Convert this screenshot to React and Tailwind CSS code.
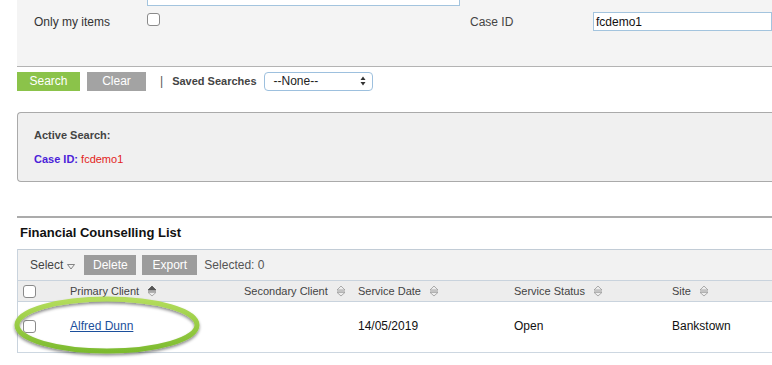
import React from 'react';

const SortIcon = ({ active }) => (
  <svg width="10" height="12" viewBox="0 0 10 12" className="shrink-0">
    <path d="M5 1 L9 5 L1 5 Z" fill={active ? '#555' : 'none'} stroke={active ? '#555' : '#999'} strokeWidth="0.8" />
    <line x1="1" y1="6.2" x2="9" y2="6.2" stroke={active ? '#777' : '#aaa'} strokeWidth="0.8" />
    <path d="M1 7.4 L9 7.4 L5 11 Z" fill="none" stroke="#999" strokeWidth="0.8" />
  </svg>
);

const Check = ({ className = '' }) => (
  <span className={`inline-block w-[13px] h-[13px] rounded-[3px] border border-[#8a8a8a] bg-white ${className}`} />
);

const columns = [
  { label: 'Primary Client', w: 'w-[174px]', active: true },
  { label: 'Secondary Client', w: 'w-[114px]' },
  { label: 'Service Date', w: 'w-[156px]' },
  { label: 'Service Status', w: 'w-[158px]' },
  { label: 'Site', w: 'flex-1' },
];

export default function App() {
  return (
    <div
      className="relative w-[772px] h-[365px] overflow-hidden bg-white text-[#333]"
      style={{ fontFamily: '"Liberation Sans", Arial, sans-serif' }}
    >
      {/* Search criteria panel */}
      <div className="ml-[17px] h-[67px] bg-[#f4f4f4] border-b border-[#b3b3b3]">
        <div className="pl-[130px]">
          <div className="w-[313px] h-[6px] bg-white border-x border-b border-[#a3c4de]" />
        </div>
        <div className="flex items-center mt-[6px] h-[19px] text-[12px]">
          <span className="w-[130px] pl-[17px]">Only my items</span>
          <span className="w-[323px] flex items-center -mt-[4px]">
            <Check />
          </span>
          <span className="w-[123px] text-[#444]">Case ID</span>
          <div className="flex-1 h-[19px] bg-white border border-[#a3c4de] pl-[2px] flex items-center text-[12px] text-[#111]">
            fcdemo1
          </div>
        </div>
      </div>

      {/* Buttons */}
      <div className="flex items-center ml-[17px] mt-[4px] h-[20px] text-[12px]">
        <button className="w-[63px] h-[19px] bg-[#8bc34a] text-white">Search</button>
        <button className="ml-[7px] w-[59px] h-[19px] bg-[#a3a3a3] text-white">Clear</button>
        <span className="ml-[14px] text-[#555]">|</span>
        <span className="ml-[9px] text-[11px] font-bold text-[#444]">Saved Searches</span>
        <div className="ml-[7px] w-[109px] h-[19px] rounded-[4px] border border-[#9dc0de] bg-white flex items-center justify-between pl-[9px] pr-[6px] text-[#222]">
          <span>--None--</span>
          <svg width="6" height="10" viewBox="0 0 6 10">
            <path d="M3 0.5 L5.5 4 L0.5 4 Z" fill="#333" />
            <path d="M0.5 6 L5.5 6 L3 9.5 Z" fill="#333" />
          </svg>
        </div>
      </div>

      {/* Active search */}
      <div className="ml-[17px] mt-[21px] h-[70px] rounded-l-[4px] border border-r-0 border-[#aaaaaa] bg-[#f0f0f0] pl-[16px] pt-[15px] text-[11px]">
        <div className="font-bold text-[#444] leading-[14px]">Active Search:</div>
        <div className="mt-[10px] leading-[14px]">
          <span className="font-bold text-[#4b1fd9]">Case ID: </span>
          <span className="text-[#e3231b]">fcdemo1</span>
        </div>
      </div>

      <div className="ml-[17px] mt-[34px] h-[2px] bg-[#ababab]" />

      <div className="ml-[20px] mt-[7px] text-[13px] font-bold text-[#111] leading-[16px]">
        Financial Counselling List
      </div>

      {/* Table */}
      <div className="ml-[17px] mt-[8px] border-l border-[#c9d3dd]">
        <div className="h-[31px] bg-[#f2f2f2] border-t border-[#c2ccd6] flex items-center text-[12px]">
          <span className="ml-[12px] text-[#444]">Select</span>
          <svg width="8" height="6" viewBox="0 0 8 6" className="ml-[4px] mt-[3px]">
            <path d="M0.5 0.5 L7.5 0.5 L4 5 Z" fill="none" stroke="#777" strokeWidth="0.9" />
          </svg>
          <button className="ml-[9px] w-[52px] h-[20px] bg-[#9c9c9c] text-white">Delete</button>
          <button className="ml-[6px] w-[55px] h-[20px] bg-[#9c9c9c] text-white">Export</button>
          <span className="ml-[7px] text-[#555]">Selected: 0</span>
        </div>
        <div className="h-[22px] bg-[#ededed] border-y border-[#c9d3dd] flex items-center text-[11px] text-[#444]">
          <div className="w-[52px] pl-[5px] flex items-center">
            <Check />
          </div>
          {columns.map((c) => (
            <div key={c.label} className={`${c.w} flex items-center gap-[8px]`}>
              <span>{c.label}</span>
              <SortIcon active={c.active} />
            </div>
          ))}
        </div>
        <div className="h-[51px] pb-[2px] border-b border-[#cdd7e1] flex items-center text-[12px] text-[#111]">
          <div className="w-[52px] pl-[5px] flex items-center">
            <Check />
          </div>
          <div className="w-[174px]">
            <a href="#" className="text-[#1c4f9c] underline">Alfred Dunn</a>
          </div>
          <div className="w-[114px]" />
          <div className="w-[156px]">14/05/2019</div>
          <div className="w-[158px]">Open</div>
          <div className="flex-1">Bankstown</div>
        </div>
      </div>

      {/* Highlight ellipse annotation */}
      <svg className="absolute left-[8px] top-[292px]" width="206" height="70" viewBox="0 0 206 70">
        <defs>
          <linearGradient id="g" x1="0" y1="0" x2="0" y2="1">
            <stop offset="0" stopColor="#b4dd5c" />
            <stop offset="1" stopColor="#7dbb2f" />
          </linearGradient>
          <filter id="s" x="-10%" y="-20%" width="120%" height="150%">
            <feDropShadow dx="0" dy="2" stdDeviation="1.5" floodColor="#000" floodOpacity="0.45" />
          </filter>
        </defs>
        <ellipse cx="99" cy="33" rx="90" ry="26" fill="none" stroke="url(#g)" strokeWidth="5" filter="url(#s)" />
      </svg>
    </div>
  );
}
